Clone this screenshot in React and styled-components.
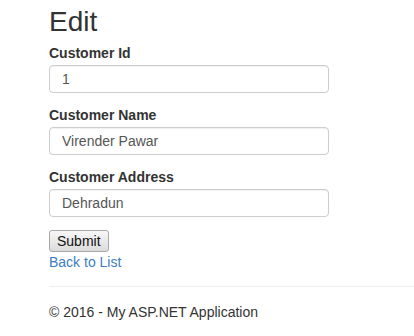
import styled, { createGlobalStyle } from 'styled-components'

const GlobalStyle = createGlobalStyle`
    body {
        margin: 0;
        background: #fff;
        font-family: "Liberation Sans", Arial, sans-serif;
        color: #333;
        overflow: hidden;
    }
`

const Page = styled.div`
    padding-left: 49px;
`

const Title = styled.h2`
    margin: 6px 0 0;
    font-size: 28px;
    line-height: 31px;
    font-weight: 400;
    color: #333;
`

const Form = styled.form`
    margin-top: 6px;
`

const Field = styled.div`
    margin-bottom: 12px;
`

const Label = styled.label`
    display: block;
    margin-bottom: 2px;
    font-size: 14px;
    line-height: 20px;
    font-weight: 700;
    color: #333;
`

const Input = styled.input`
    box-sizing: border-box;
    display: block;
    width: 280px;
    height: 28px;
    padding: 4px 12px;
    border: 1px solid #ccc;
    border-radius: 4px;
    font-family: inherit;
    font-size: 14px;
    color: #555;
    background: #fff;
    box-shadow: inset 0 1px 1px rgba(0, 0, 0, 0.06);
`

const SubmitButton = styled.button`
    display: block;
    box-sizing: border-box;
    margin-top: 13px;
    height: 22px;
    padding: 0 7px;
    border: 1px solid #a8a8a8;
    border-radius: 3px;
    background: linear-gradient(#f7f7f7, #dcdcdc);
    font-family: inherit;
    font-size: 14px;
    color: #111;
`

const BackLink = styled.a`
    display: block;
    font-size: 14px;
    line-height: 20px;
    color: #3c7dbf;
    text-decoration: none;
`

const Rule = styled.hr`
    margin: 14px 0 0;
    border: 0;
    border-top: 1px solid #eee;
`

const Footer = styled.footer`
    margin-top: 15px;
    font-size: 14px;
    line-height: 20px;
    color: #333;
`

const fields = [
    { id: 'CustomerId', label: 'Customer Id', value: '1' },
    { id: 'CustomerName', label: 'Customer Name', value: 'Virender Pawar' },
    { id: 'CustomerAddress', label: 'Customer Address', value: 'Dehradun' },
]

const App = () => {
    return (
        <>
            <GlobalStyle />
            <Page>
                <Title>Edit</Title>
                <Form onSubmit={(e) => e.preventDefault()}>
                    {fields.map((f) => (
                        <Field key={f.id}>
                            <Label htmlFor={f.id}>{f.label}</Label>
                            <Input id={f.id} defaultValue={f.value} />
                        </Field>
                    ))}
                    <SubmitButton type="submit">Submit</SubmitButton>
                </Form>
                <BackLink href="#">Back to List</BackLink>
                <Rule />
                <Footer>© 2016 - My ASP.NET Application</Footer>
            </Page>
        </>
    )
}

export default App
